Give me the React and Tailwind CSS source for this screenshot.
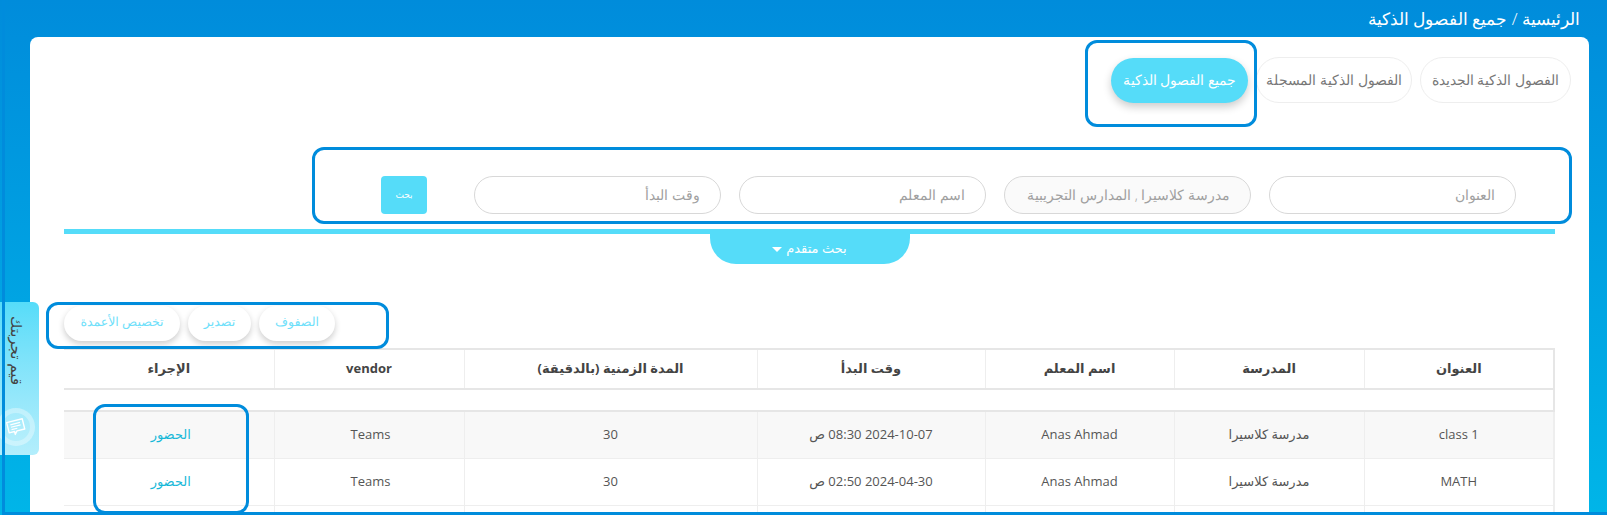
import React from "react";

const font = "font-['Open_Sans','DejaVu_Sans',sans-serif]";

const heads = ["العنوان", "المدرسة", "اسم المعلم", "وقت البدأ", "المدة الزمنية (بالدقيقة)", "vendor", "الإجراء"];
const widths = ["w-[190px]", "w-[190px]", "w-[189px]", "w-[228px]", "w-[293px]", "w-[190px]", "w-[210px]"];

const rows = [
  ["class 1", "مدرسة كلاسيرا", "Anas Ahmad", "2024-10-07 08:30 ص", "30", "Teams"],
  ["MATH", "مدرسة كلاسيرا", "Anas Ahmad", "2024-04-30 02:50 ص", "30", "Teams"],
];

const Marker = ({ className }) => (
  <div className={`absolute border-[3px] border-[#008cdc] rounded-[12px] pointer-events-none ${className}`} />
);

const Field = ({ placeholder, className = "bg-white" }) => (
  <div className={`w-[247px] h-[38px] rounded-full border border-[#d8d8d8] flex items-center pr-[20px] text-[14px] font-light text-[#a0a0a0] ${className}`}>
    {placeholder}
  </div>
);

const ToolButton = ({ children, className }) => (
  <button className={`h-[35px] pb-[2px] rounded-full bg-white text-[#6fe0fa] text-[12.5px] font-light [text-rendering:geometricPrecision] shadow-[0_3px_6px_rgba(0,0,0,0.2)] ${className}`}>
    {children}
  </button>
);

const FeedbackIcon = () => (
  <svg width="20" height="20" viewBox="0 0 20 20" fill="none" stroke="white" strokeWidth="1.4" strokeLinejoin="round">
    <g transform="rotate(-14 10 10)">
      <path d="M2 3.5h16v10.5h-8l-2.5 3v-3H2z" />
      <path d="M5 6.5h10M5 9h10M5 11.5h6" strokeWidth="1.2" />
    </g>
  </svg>
);

export default function App() {
  return (
    <div dir="rtl" className={`relative h-[515px] overflow-hidden bg-gradient-to-b from-[#008cdb] to-[#00b5e8] ${font}`}>
      <div className="h-[37px] pr-[27px] flex items-center text-white text-[17px] font-light">الرئيسية / جميع الفصول الذكية</div>

      <div className="mr-[18px] ml-[30px] h-[478px] bg-white rounded-t-[8px]">
        {/* tabs */}
        <div className="flex gap-[8px] pr-[18px] pt-[20px] text-[13.7px] font-light [text-rendering:geometricPrecision]">
          <button className="w-[151px] h-[46px] rounded-full border border-[#eeeeee] text-[#777]">الفصول الذكية الجديدة</button>
          <button className="w-[156px] h-[46px] rounded-full border border-[#eeeeee] text-[#777]">الفصول الذكية المسجلة</button>
          <button className="w-[137px] h-[45px] mt-px rounded-full bg-[#55dcf9] text-white shadow-[0_4px_8px_rgba(0,0,0,0.2)]">جميع الفصول الذكية</button>
        </div>

        {/* search */}
        <div className="flex items-center gap-[18px] pr-[73px] mt-[72px]">
          <Field placeholder="العنوان" />
          <Field placeholder="مدرسة كلاسيرا , المدارس التجريبية" className="bg-[#fafafa]" />
          <Field placeholder="اسم المعلم" />
          <Field placeholder="وقت البدأ" />
          <button className="w-[46px] h-[38px] mr-[29px] mt-px rounded-[4px] bg-[#55dcf9] text-white text-[9px]">بحث</button>
        </div>

        <div className="mx-[34px] mt-[15px] h-[5px] bg-[#55dcf9]" />
        <div className="flex justify-center mx-[34px]">
          <button className="w-[200px] h-[30px] rounded-b-[26px] bg-[#55dcf9] text-white text-[13px] flex items-center justify-center gap-1">
            بحث متقدم
            <span className="w-0 h-0 border-x-[5px] border-x-transparent border-t-[5px] border-t-white" />
          </button>
        </div>

        {/* toolbar */}
        <div className="flex gap-[8px] justify-end pl-[34px] mt-[42px]">
          <ToolButton className="w-[76px]">الصفوف</ToolButton>
          <ToolButton className="w-[63px]">تصدير</ToolButton>
          <ToolButton className="w-[116px]">تخصيص الأعمدة</ToolButton>
        </div>

        {/* table */}
        <div className="mr-[34px] ml-[35px] mt-[7px]">
          <table className="w-full table-fixed border-collapse text-[13px] text-[#555] text-center">
            <thead>
              <tr className="h-[40px] border-y-2 border-r-2 border-[#e6e6e6] text-[#444]">
                {heads.map((h, i) => (
                  <th key={h} className={`font-bold ${i < 6 ? "border-l border-[#eeeeee]" : ""} ${widths[i]}`}>{h}</th>
                ))}
              </tr>
            </thead>
            <tbody>
              <tr className="h-[22px] border-r-2 border-b-2 border-[#e6e6e6]">
                <td colSpan={7} />
              </tr>
              {rows.map((row, i) => (
                <tr key={row[0]} className={`h-[47px] border-b border-r-2 border-[#eeeeee] ${i === 0 ? "bg-[#f8f8f8]" : "bg-white"}`}>
                  {row.map((c, j) => (
                    <td key={j} className={`border-l border-[#eeeeee] ${j === 5 ? "pl-[3px]" : ""}`}>{c}</td>
                  ))}
                  <td className="pl-[4px] text-[#17b8d8]">الحضور</td>
                </tr>
              ))}
              <tr className="h-[47px] border-r-2 border-[#eeeeee]">
                {heads.map((h, i) => (
                  <td key={h} className={i < 6 ? "border-l border-[#eeeeee]" : ""} />
                ))}
              </tr>
            </tbody>
          </table>
        </div>
      </div>

      {/* floating help tab */}
      <div className="absolute left-0 top-[302px] w-[39px] h-[153px] rounded-r-[6px] bg-gradient-to-b from-[#55dcf9] to-[#b3eefc] overflow-hidden">
        <span className="absolute top-[14px] left-[7px] text-[15px] leading-[20px] text-[#444] [writing-mode:vertical-rl] whitespace-nowrap">قيم تجربتك</span>
        <div className="absolute -left-[3px] bottom-[9px] w-[38px] h-[38px] rounded-full border-[5px] border-white/30 bg-white/10 flex items-center justify-center">
          <FeedbackIcon />
        </div>
      </div>

      {/* highlight frames */}
      <Marker className="left-[1085px] top-[40px] w-[172px] h-[87px]" />
      <Marker className="left-[312px] top-[147px] w-[1260px] h-[77px]" />
      <Marker className="left-[46px] top-[302px] w-[343px] h-[47px]" />
      <Marker className="left-[93px] top-[404px] w-[156px] h-[110px]" />
      <div className="absolute left-[2px] top-0 w-[3px] h-full bg-[#008cdc]" />
      <div className="absolute left-[2px] right-0 bottom-0 h-[3px] bg-[#008cdc]" />
    </div>
  );
}
